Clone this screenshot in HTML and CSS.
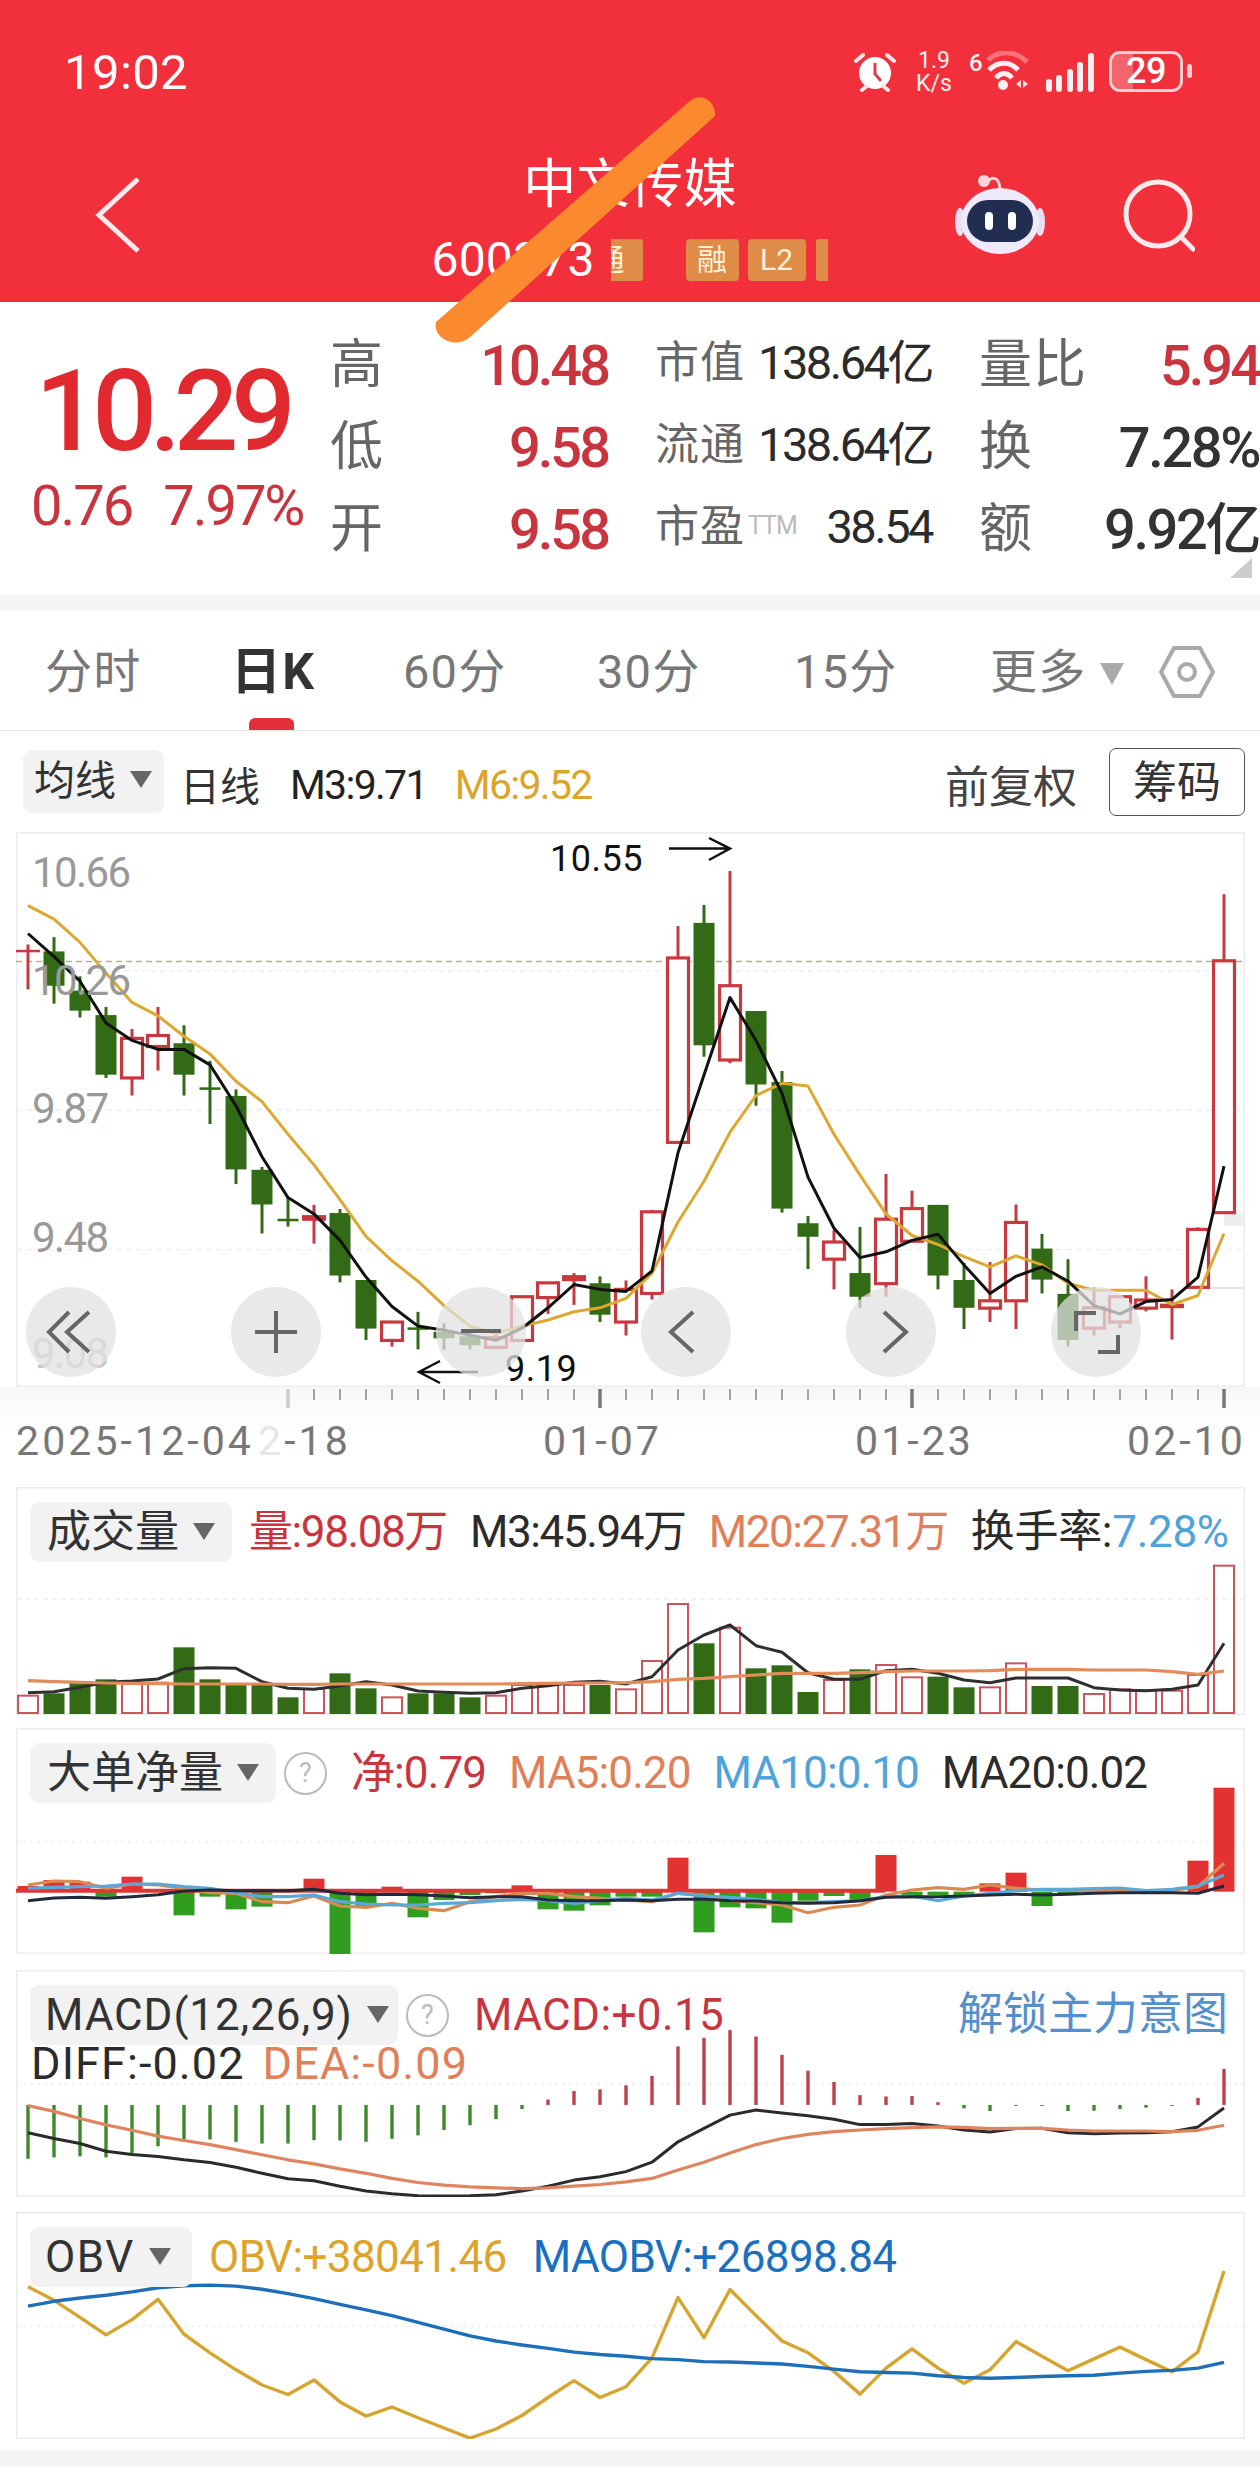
FILE: index.html
```html
<!DOCTYPE html>
<html lang="zh">
<head>
    <meta charset="utf-8">
    <title>中文传媒 日K</title>
    <link rel="stylesheet" href="styles.css">
</head>
<body>
<div class="page">

    <!-- 顶部红色区域 -->
    <header class="top">
        <div class="status">
            <span class="clock">19:02</span>
            <div class="status-icons">
                <svg class="ic-alarm" width="42" height="40" viewBox="0 0 42 40">
                    <circle cx="21" cy="21" r="16" fill="#fff"/>
                    <path d="M21 11v11l6 7" fill="none" stroke="#d8404a" stroke-width="3"/>
                    <path d="M2 9l7-6M40 9l-7-6M8 38l5-4M34 38l-5-4" stroke="#ffe6e6" stroke-width="4" stroke-linecap="round"/>
                </svg>
                <div class="speed"><span>1.9</span><span>K/s</span></div>
                <div class="wifi">
                    <span class="wifi-six">6</span>
                    <svg width="44" height="40" viewBox="0 0 44 40">
                        <path d="M3 9C14 -1 30 -1 42 11" fill="none" stroke="#f8727c" stroke-width="5"/>
                        <path d="M4 19C13 10 25 10 33 19" fill="none" stroke="#ffeef0" stroke-width="5"/>
                        <path d="M11 27C16 21 22 21 27 27" fill="none" stroke="#ffeef0" stroke-width="5"/>
                        <circle cx="18" cy="34" r="5" fill="#ffeef0"/>
                        <path d="M31 33l5-4v8zM38 29l5 4-5 4z" fill="#ffdfe2"/>
                    </svg>
                </div>
                <svg class="ic-signal" width="50" height="40" viewBox="0 0 50 40">
                    <g stroke="#ffeef0" stroke-width="6" stroke-linecap="round">
                        <path d="M4 30v7M14 26v11M25 20v17M35 13v24M46 4v33"/>
                    </g>
                </svg>
                <div class="battery">
                    <span class="battery-fill"></span>
                    <span class="battery-num">29</span>
                </div>
                <span class="battery-nub"></span>
            </div>
        </div>
        <div class="nav">
            <svg class="ic-back" width="50" height="80" viewBox="0 0 50 80">
                <path d="M44 4L5 40l39 36" fill="none" stroke="#ffe9ea" stroke-width="5"/>
            </svg>
            <div class="nav-title">
                <div class="name">中文传媒</div>
                <div class="code-row">
                    <span class="code">600373</span>
                    <span class="tag tag-cut">通</span>
                    <span class="tag tag-rong">融</span>
                    <span class="tag tag-l2">L2</span>
                    <span class="tag tag-sliver"></span>
                </div>
            </div>
            <svg class="ic-robot" width="90" height="82" viewBox="0 0 90 82">
                <path d="M31 12c4-9 13-10 14 4" fill="none" stroke="#f2d6dc" stroke-width="3"/>
                <circle cx="29" cy="8" r="6" fill="#ffd3da"/>
                <ellipse cx="5" cy="49" rx="5" ry="14" fill="#e9ddf4"/>
                <ellipse cx="85" cy="49" rx="5" ry="14" fill="#e9ddf4"/>
                <ellipse cx="45" cy="48" rx="39" ry="33" fill="#eeeafa"/>
                <rect x="12" y="27" width="66" height="42" rx="21" fill="#222d52"/>
                <rect x="30" y="39" width="8" height="18" rx="4" fill="#fff"/>
                <rect x="53" y="39" width="8" height="18" rx="4" fill="#fff"/>
            </svg>
            <svg class="ic-search" width="72" height="74" viewBox="0 0 72 74">
                <circle cx="35" cy="35" r="32" fill="none" stroke="#ffe9ea" stroke-width="5"/>
                <path d="M58 58l12 12" stroke="#ffe9ea" stroke-width="5" stroke-linecap="round"/>
            </svg>
        </div>
    </header>

    <!-- 报价 -->
    <section class="quote">
        <div class="price-box">
            <div class="price">10.29</div>
            <div class="change"><span>0.76</span><span>7.97%</span></div>
        </div>
        <div class="stats">
            <div class="stat"><span class="lb-big">高</span><span class="up">10.48</span></div>
            <div class="stat stat-mid"><span class="lb-mid">市值</span><span class="val-mid">138.64亿</span></div>
            <div class="stat"><span class="lb-big">量比</span><span class="up">5.94</span></div>
            <div class="stat"><span class="lb-big">低</span><span class="up">9.58</span></div>
            <div class="stat stat-mid"><span class="lb-mid">流通</span><span class="val-mid">138.64亿</span></div>
            <div class="stat"><span class="lb-big">换</span><span class="dark">7.28%</span></div>
            <div class="stat"><span class="lb-big">开</span><span class="up">9.58</span></div>
            <div class="stat stat-mid"><span class="lb-mid">市盈<sup class="ttm">TTM</sup></span><span class="val-mid">38.54</span></div>
            <div class="stat"><span class="lb-big">额</span><span class="dark">9.92亿</span></div>
        </div>
        <span class="corner"></span>
    </section>
    <div class="band"></div>

    <!-- 周期 -->
    <nav class="tabs">
        <span class="tab">分时</span>
        <span class="tab tab-on">日K</span>
        <span class="tab">60分</span>
        <span class="tab">30分</span>
        <span class="tab">15分</span>
        <span class="tab tab-more">更多<i class="tri tri-light"></i>
            <svg class="ic-hex" width="56" height="56" viewBox="0 0 56 56">
                <path d="M15 4h26l13 24-13 24H15L2 28z" fill="none" stroke="#aaa" stroke-width="4"/>
                <circle cx="28" cy="28" r="8" fill="none" stroke="#aaa" stroke-width="4"/>
            </svg>
        </span>
    </nav>

    <div class="toolbar">
        <span class="chip chip-ma">均线<i class="tri"></i></span>
        <span class="tb-day">日线</span>
        <span class="tb-m3">M3:9.71</span>
        <span class="tb-m6">M6:9.52</span>
        <span class="tb-fq">前复权</span>
        <span class="tb-chip">筹码</span>
    </div>

    <!-- K线 -->
    <section class="panel panel-k">
        <svg id="chart-k" width="1229" height="555" viewBox="16 832 1229 555"></svg>
        <span class="axis axis-1">10.66</span>
        <span class="axis axis-2">10.26</span>
        <span class="axis axis-3">9.87</span>
        <span class="axis axis-4">9.48</span>
        <span class="axis axis-5">9.08</span>
        <span class="mark mark-high">10.55</span>
        <span class="mark mark-low">9.19</span>
        <div class="chart-btns">
            <span class="chart-btn"><svg width="90" height="90" viewBox="0 0 90 90"><path d="M43 25L23 45l20 20M63 25L41 45l22 20"/></svg></span>
            <span class="chart-btn"><svg width="90" height="90" viewBox="0 0 90 90"><path d="M45 24v42M24 45h42"/></svg></span>
            <span class="chart-btn"><svg width="90" height="90" viewBox="0 0 90 90"><path d="M25 44h40"/></svg></span>
            <span class="chart-btn"><svg width="90" height="90" viewBox="0 0 90 90"><path d="M52 25L30 45l22 20"/></svg></span>
            <span class="chart-btn"><svg width="90" height="90" viewBox="0 0 90 90"><path d="M38 25l22 20-22 20"/></svg></span>
            <span class="chart-btn"><svg width="90" height="90" viewBox="0 0 90 90"><path d="M25 44V26h20M47 65h20V48"/></svg></span>
        </div>
    </section>

    <div class="dates">
        <svg id="ticks" width="1260" height="22" viewBox="0 1387 1260 22"></svg>
        <div class="date-row">
            <span>2025-12-04</span>
            <span><b class="fade">2</b>-18</span>
            <span>01-07</span>
            <span>01-23</span>
            <span>02-10</span>
        </div>
    </div>

    <!-- 成交量 -->
    <section class="panel panel-vol">
        <svg id="chart-vol" width="1229" height="228" viewBox="16 1487 1229 228"></svg>
        <div class="legend">
            <span class="chip">成交量<i class="tri"></i></span>
            <span class="red">量:98.08万</span>
            <span class="black">M3:45.94万</span>
            <span class="orange">M20:27.31万</span>
            <span class="black turnover">换手率:<b class="blue">7.28%</b></span>
        </div>
    </section>

    <!-- 大单净量 -->
    <section class="panel panel-net">
        <svg id="chart-net" width="1229" height="226" viewBox="16 1728 1229 226"></svg>
        <div class="legend legend-net">
            <span class="chip">大单净量<i class="tri"></i></span>
            <span class="help">?</span>
            <span class="red">净:0.79</span>
            <span class="orange">MA5:0.20</span>
            <span class="blue">MA10:0.10</span>
            <span class="black">MA20:0.02</span>
        </div>
    </section>

    <!-- MACD -->
    <section class="panel panel-macd">
        <svg id="chart-macd" width="1229" height="227" viewBox="16 1970 1229 227"></svg>
        <div class="legend">
            <span class="chip chip-macd">MACD(12,26,9)<i class="tri"></i></span>
            <span class="help">?</span>
            <span class="red macd-val">MACD:+0.15</span>
            <span class="unlock">解锁主力意图</span>
        </div>
        <div class="legend legend-2">
            <span class="black">DIFF:-0.02</span>
            <span class="orange">DEA:-0.09</span>
        </div>
    </section>

    <!-- OBV -->
    <section class="panel panel-obv">
        <svg id="chart-obv" width="1229" height="227" viewBox="16 2212 1229 227"></svg>
        <div class="legend legend-obv">
            <span class="chip chip-obv">OBV<i class="tri"></i></span>
            <span class="gold">OBV:+38041.46</span>
            <span class="navy">MAOBV:+26898.84</span>
        </div>
    </section>

    <div class="band band-end"></div>

    <svg class="stroke" width="760" height="360" viewBox="0 0 760 360">
        <path d="M690 101C700 92 716 100 715 116L470 337C456 350 432 338 436 322z" fill="#fb8a2e"/>
    </svg>
</div>
<script src="chart.js"></script>
</body>
</html>
```

FILE: styles.css
```css
* {
    box-sizing: border-box;
}

body {
    margin: 0;
    background-color: #fff;
    font-family: Roboto, "Noto Sans CJK SC", sans-serif;
    color: #333;
}

.page {
    position: relative;
    width: 1260px;
    height: 2491px;
    overflow: hidden;
}

/* top */
.top {
    height: 302px;
    background-color: #f1303c;
    color: #fff;
}

.status {
    display: flex;
    align-items: flex-start;
    justify-content: space-between;
    height: 130px;
    padding: 45px 68px 0 64px;
}

.clock {
    font-size: 49px;
    line-height: 56px;
    letter-spacing: 0.4px;
}

.status-icons {
    display: flex;
    align-items: flex-start;
    padding-top: 6px;
}

.ic-alarm {
    margin-top: 1px;
}

.speed {
    display: flex;
    flex-direction: column;
    width: 40px;
    margin: -2px 0 0 18px;
    color: #ffeef0;
    text-align: center;
    font-size: 23px;
    line-height: 23px;
}

.wifi {
    display: flex;
    margin-left: 15px;
}

.wifi-six {
    width: 16px;
    color: #ffeef0;
    font-size: 24px;
    line-height: 24px;
    font-weight: 500;
}

.ic-signal {
    margin-left: 16px;
    margin-top: 1px;
}

.battery {
    position: relative;
    width: 74px;
    height: 41px;
    margin-left: 14px;
    border: 3px solid #fbd0d4;
    border-radius: 11px;
    text-align: center;
}

.battery-fill {
    position: absolute;
    left: 0;
    top: 0;
    bottom: 0;
    width: 21px;
    background-color: rgba(255, 255, 255, 0.25);
    border-radius: 8px 0 0 8px;
}

.battery-num {
    position: relative;
    display: block;
    font-size: 36px;
    line-height: 35px;
    font-weight: 500;
    letter-spacing: -0.5px;
}

.battery-nub {
    width: 5px;
    height: 14px;
    margin: 13px 0 0 4px;
    background-color: #fbd0d4;
    border-radius: 3px;
}

.nav {
    position: relative;
    display: flex;
    justify-content: center;
}

.nav-title {
    text-align: center;
}

.name {
    height: 82px;
    padding-top: 25px;
    font-size: 53px;
    line-height: 60px;
    letter-spacing: 0.4px;
}

.code-row {
    display: flex;
    align-items: center;
    height: 48px;
    margin-top: 24px;
}

.code {
    width: 159px;
    margin-left: -1px;
    font-size: 48px;
    line-height: 48px;
    letter-spacing: 0.2px;
    color: #fff;
    text-align: left;
}

.tag {
    height: 42px;
    background-color: #de8c48;
    border-radius: 4px;
    color: #fff2d8;
    font-size: 30px;
    line-height: 42px;
    text-align: center;
    overflow: hidden;
}

.tag-cut {
    width: 32px;
    margin-left: 20px;
    border-radius: 0 3px 3px 0;
    text-indent: -16px;
    white-space: nowrap;
    text-align: left;
}

.tag-rong {
    width: 53px;
    margin-left: 43px;
}

.tag-l2 {
    width: 58px;
    margin-left: 9px;
}

.tag-sliver {
    width: 12px;
    margin-left: 10px;
    border-radius: 3px 0 0 3px;
}

/* icons lying on the red bar */
.ic-back {
    position: absolute;
    left: 94px;
    top: 45px;
}

.ic-robot {
    position: absolute;
    left: 955px;
    top: 43px;
}

.ic-search {
    position: absolute;
    left: 1123px;
    top: 49px;
}

.stroke {
    position: absolute;
    left: 0;
    top: 0;
}

/* quote */
.quote {
    position: relative;
    display: flex;
    height: 293px;
}

.price-box {
    width: 330px;
    padding: 53px 0 0 31px;
}

.price {
    margin-left: 4px;
    font-size: 114px;
    line-height: 112px;
    letter-spacing: -7.5px;
    font-weight: 500;
    color: #e02a30;
}

.change {
    display: flex;
    gap: 31px;
    margin-top: 9px;
    font-size: 56px;
    line-height: 60px;
    letter-spacing: -2px;
    color: #c9353e;
}

.stats {
    display: grid;
    grid-template-columns: 278px 277px 280px;
    grid-auto-rows: 82px;
    column-gap: 47px;
    padding-top: 22px;
}

.stat {
    display: flex;
    align-items: center;
    justify-content: space-between;
    font-size: 56px;
    line-height: 60px;
    letter-spacing: -3px;
    font-weight: 500;
    white-space: nowrap;
}

.stat .lb-big {
    margin-top: -1px;
    font-size: 53px;
    letter-spacing: 1px;
    font-weight: 400;
    color: #666;
}

.up {
    margin-top: 2px;
    color: #c9353e;
}

.stat .dark {
    margin-top: 2px;
    letter-spacing: -2.4px;
    color: #333;
}

.stat-mid {
    padding-bottom: 4px;
}

.stat .lb-mid {
    font-size: 44px;
    letter-spacing: 1px;
    font-weight: 400;
    color: #666;
}

.val-mid {
    font-size: 47px;
    letter-spacing: -2.5px;
    font-weight: 400;
    color: #2b2b2b;
}

.ttm {
    margin-left: 3px;
    font-size: 25px;
    letter-spacing: -1px;
    color: #bbb;
    vertical-align: 8px;
    line-height: 0;
}

.corner {
    position: absolute;
    right: 8px;
    bottom: 17px;
    border-left: 22px solid transparent;
    border-bottom: 20px solid #ccc;
}

.band {
    height: 15px;
    background-color: #f5f5f5;
}

.band-end {
    height: 16px;
    margin-top: 11px;
}

/* tabs */
.tabs {
    display: grid;
    grid-template-columns: 190px 168px 194px 197px 196px 1fr;
    height: 121px;
    padding-left: 45px;
    border-bottom: 1.5px solid #e4e4e4;
    font-size: 47px;
    letter-spacing: 1.2px;
    color: #777;
}

.tab {
    position: relative;
    padding-top: 34px;
    line-height: 56px;
}

.tab-on {
    margin-left: -4px;
    font-size: 50px;
    font-weight: 700;
    color: #333;
}

.tab-on::after {
    content: "";
    position: absolute;
    left: 18px;
    bottom: 0;
    width: 45px;
    height: 12px;
    background-color: #e5303a;
    border-radius: 6px 6px 0 0;
}

.tab-more {
    display: flex;
    align-items: flex-start;
}

.tri {
    display: inline-block;
    width: 0;
    height: 0;
    margin-left: 14px;
    border-left: 11px solid transparent;
    border-right: 11px solid transparent;
    border-top: 17px solid #666;
    vertical-align: 7px;
}

.tri-light {
    margin: 19px 0 0 14px;
    border-left-width: 12px;
    border-right-width: 12px;
    border-top: 22px solid #aaa;
}

.ic-hex {
    margin: 0 0 0 35px;
}

/* toolbar */
.toolbar {
    display: flex;
    align-items: center;
    height: 101px;
    padding: 0 15px 0 23px;
    white-space: nowrap;
}

.chip {
    display: inline-block;
    height: 60px;
    padding: 0 17px;
    background-color: #f2f2f2;
    border-radius: 9px;
    color: #333;
    font-size: 44px;
    line-height: 60px;
}

.chip-ma {
    width: 141px;
    height: 63px;
    padding: 0 0 0 11px;
    font-size: 41px;
    line-height: 63px;
}

.tb-day {
    margin: 5px 0 0 16px;
    font-size: 40px;
}

.tb-m3,
.tb-m6 {
    margin-top: 6px;
    font-size: 41px;
    letter-spacing: -1.7px;
}

.tb-m3 {
    margin-left: 30px;
    color: #222;
}

.tb-m6 {
    margin-left: 28px;
    color: #dba52b;
}

.tb-fq {
    margin-left: auto;
    margin-top: 4px;
    font-size: 44px;
    color: #444;
}

.tb-chip {
    width: 136px;
    height: 68px;
    margin-left: 32px;
    border: 1.5px solid #555;
    border-radius: 7px;
    font-size: 44px;
    line-height: 68px;
    text-align: center;
}

/* chart panels */
.panel {
    position: relative;
    width: 1229px;
    margin-left: 16px;
    box-shadow: inset 0 0 0 1.5px #ececec;
}

.panel svg {
    display: block;
}

.panel-k {
    height: 555px;
}

.panel-vol {
    height: 228px;
}

.panel-net {
    height: 226px;
    margin-top: 13px;
}

.panel-macd {
    height: 227px;
    margin-top: 16px;
}

.panel-obv {
    height: 227px;
    margin-top: 15px;
}

.axis {
    position: absolute;
    left: 16px;
    font-size: 42px;
    line-height: 40px;
    letter-spacing: -1.6px;
    color: #999;
}

.axis-1 { top: 21px; }
.axis-2 { top: 129px; }
.axis-3 { top: 257px; }
.axis-4 { top: 386px; }
.axis-5 { top: 502px; opacity: 0.6; }

.mark {
    position: absolute;
    font-size: 36px;
    line-height: 36px;
    letter-spacing: 0.5px;
    color: #111;
}

.mark-high {
    left: 534px;
    top: 9px;
}

.mark-low {
    left: 489px;
    top: 519px;
}

.chart-btns {
    position: absolute;
    left: 10px;
    top: 455px;
    display: flex;
    gap: 115px;
}

.chart-btn {
    width: 90px;
    height: 90px;
    background-color: rgba(226, 226, 226, 0.75);
    border-radius: 50%;
}

.chart-btn path {
    fill: none;
    stroke: #666;
    stroke-width: 4;
}

.dates {
    height: 100px;
    background: linear-gradient(#f7f7f7, #fff 45%);
}

#ticks {
    display: block;
}

.date-row {
    display: grid;
    grid-template-columns: 242px 285px 312px 272px auto;
    padding: 7px 0 0 16px;
    font-size: 41px;
    line-height: 50px;
    letter-spacing: 3.1px;
    color: #777;
    white-space: nowrap;
}

.fade {
    font-weight: 400;
    color: #e6e6e6;
}

.legend {
    position: absolute;
    left: 14px;
    right: 17px;
    top: 15px;
    display: flex;
    align-items: center;
    gap: 23px;
    font-size: 44px;
    line-height: 60px;
    letter-spacing: -1.4px;
    white-space: nowrap;
}

.legend .chip {
    margin-right: -6px;
    letter-spacing: 0;
}

.legend .chip-macd {
    width: 368px;
    padding: 0 0 0 15px;
    letter-spacing: 0.9px;
}

.legend .chip-obv {
    width: 162px;
    padding: 0 0 0 15px;
    letter-spacing: 1.6px;
}

.legend .turnover {
    letter-spacing: -0.3px;
}

.legend .macd-val {
    margin-left: 1px;
    letter-spacing: 0.4px;
}

.legend .help {
    width: 43px;
    height: 43px;
    margin: 0 1px 0 -9px;
    border: 2.5px solid #bbb;
    border-radius: 50%;
    color: #bbb;
    font-size: 27px;
    line-height: 38px;
    text-align: center;
    letter-spacing: 0;
}

.legend-net {
    letter-spacing: -0.9px;
}

.legend-2 {
    top: 66px;
    left: 15px;
    gap: 18px;
    font-size: 45px;
    line-height: 56px;
    letter-spacing: 1.1px;
}

.legend-obv {
    letter-spacing: -0.6px;
}

.red { color: #c9353e; }
.orange { color: #e0805a; }
.black { color: #2b2b2b; }
.blue { color: #4fa3d9; font-weight: 400; }
.gold { color: #dda32a; }
.navy { color: #1b6fc0; margin-left: 3px; }

.unlock {
    margin-left: auto;
    font-size: 45px;
    letter-spacing: 0;
    color: #5590cc;
}
```

FILE: chart.js
```js
const X = (i) => 28 + 26 * i;
const NS = 'http://www.w3.org/2000/svg';

function add(svg, tag, attrs) {
    const el = document.createElementNS(NS, tag);
    for (const key in attrs) el.setAttribute(key, attrs[key]);
    svg.appendChild(el);
    return el;
}

function line(svg, vals, toY, color, width) {
    const points = vals.map((v, i) => X(i) + ',' + toY(v).toFixed(1)).join(' ');
    add(svg, 'polyline', { points, fill: 'none', stroke: color, 'stroke-width': width, 'stroke-linejoin': 'round' });
}

function dashed(svg, y, color, width, dash) {
    add(svg, 'line', { x1: 16, x2: 1245, y1: y, y2: y, stroke: color, 'stroke-width': width, 'stroke-dasharray': dash });
}

const RED = '#c8383f';
const GREEN = '#326a16';

/* K线: [颜色, 上影, 下影, 实体上, 实体下] */
const candles = [
    ['r', 305, 415, 318, 323], ['g', 287, 450, 322, 406], ['g', 383, 484, 418, 467], ['g', 458, 632, 478, 624],
    ['h', 512, 675, 535, 632], ['h', 458, 614, 528, 555], ['g', 503, 675, 547, 624], ['g', 590, 745, 655, 661],
    ['g', 660, 892, 676, 856], ['g', 850, 1013, 857, 942], ['g', 925, 996, 977, 983], ['r', 943, 1038, 968, 982],
    ['g', 953, 1133, 963, 1116], ['g', 1127, 1274, 1127, 1246], ['h', 1230, 1290, 1230, 1275], ['g', 1205, 1297, 1243, 1248],
    ['g', 1233, 1298, 1254, 1270], ['g', 1250, 1297, 1265, 1287], ['h', 1260, 1295, 1268, 1292], ['h', 1168, 1275, 1168, 1275],
    ['h', 1134, 1210, 1134, 1170], ['r', 1110, 1188, 1115, 1130], ['g', 1118, 1230, 1135, 1212], ['h', 1128, 1263, 1150, 1230],
    ['h', 955, 1175, 960, 1160], ['h', 260, 792, 338, 790], ['g', 208, 580, 252, 552], ['h', 125, 596, 406, 588],
    ['g', 468, 700, 468, 648], ['g', 615, 962, 642, 952], ['g', 970, 1100, 988, 1021], ['h', 1005, 1150, 1034, 1076],
    ['g', 997, 1195, 1110, 1168], ['h', 867, 1168, 978, 1136], ['h', 908, 1032, 952, 1032], ['g', 943, 1150, 943, 1116],
    ['g', 1085, 1247, 1127, 1195], ['h', 1083, 1230, 1178, 1196], ['h', 942, 1247, 986, 1178], ['g', 1014, 1160, 1050, 1126],
    ['g', 1076, 1290, 1161, 1274], ['h', 1145, 1263, 1195, 1245], ['h', 1168, 1245, 1168, 1230], ['h', 1118, 1204, 1176, 1196],
    ['r', 1150, 1273, 1185, 1196], ['h', 998, 1145, 1003, 1145], ['h', 182, 962, 345, 962],
];
const kM3 = [278, 335, 395, 497, 540, 562, 562, 600, 700, 825, 925, 965, 1030, 1120, 1192, 1240, 1250, 1262, 1275, 1245, 1195, 1138, 1150, 1155,
    1105, 815, 625, 435, 540, 670, 875, 1000, 1072, 1058, 1030, 1015, 1090, 1160, 1118, 1095, 1130, 1190, 1210, 1180, 1175, 1120, 848];
const kM6 = [210, 243, 300, 375, 447, 480, 530, 573, 640, 690, 770, 845, 930, 1020, 1080, 1130, 1190, 1240, 1258, 1240, 1225, 1205, 1195, 1172,
    1110, 985, 885, 765, 675, 645, 652, 770, 870, 965, 1018, 1040, 1070, 1095, 1068, 1090, 1135, 1152, 1152, 1152, 1187, 1165, 1013];

function drawK() {
    const svg = document.getElementById('chart-k');
    const Y = (v) => 820 + v / 2.45;
    dashed(svg, 971, '#f0f0f0', 1.5, '5 4');
    dashed(svg, 1110, '#eee', 1.5, '6 4');
    dashed(svg, 1249.5, '#eee', 1.5, '6 4');
    dashed(svg, 961.5, '#b5b09a', 1.5, '6 4');
    add(svg, 'line', { x1: 1204, x2: 1245, y1: 1288, y2: 1288, stroke: '#ddd', 'stroke-width': 1.5 });
    add(svg, 'rect', { x: 1224, y: 1213, width: 21, height: 13, fill: '#eee' });

    candles.forEach((c, i) => {
        const x = X(i);
        const [type, hi, lo, top, bot] = c;
        const color = type === 'g' ? GREEN : RED;
        add(svg, 'line', { x1: x, x2: x, y1: Y(hi), y2: Y(lo), stroke: color, 'stroke-width': 3 });
        if (type === 'h') {
            add(svg, 'rect', { x: x - 10.5, y: Y(top), width: 21, height: Y(bot) - Y(top), fill: '#fff', stroke: color, 'stroke-width': 3.2 });
        } else {
            const w = type === 'r' ? 24 : 21;
            add(svg, 'rect', { x: x - w / 2, y: Y(top), width: w, height: Math.max(Y(bot) - Y(top), 2.5), fill: color });
        }
    });
    line(svg, kM6, Y, '#dda832', 3);
    line(svg, kM3, Y, '#111', 3);

    add(svg, 'path', { d: 'M669 848.6H730M709 838L730 848.6L709 860', fill: 'none', stroke: '#111', 'stroke-width': 2.5 });
    add(svg, 'path', { d: 'M478 1372H419M440 1361L419 1372L440 1383', fill: 'none', stroke: '#111', 'stroke-width': 2.5 });
}

function drawTicks() {
    const svg = document.getElementById('ticks');
    for (let i = 10; i <= 46; i++) {
        const big = i === 10 || i === 22 || i === 34 || i === 46;
        add(svg, 'line', {
            x1: X(i), x2: X(i), y1: 1389, y2: big ? 1408 : 1400,
            stroke: i === 10 ? '#ccc' : (big ? '#777' : '#999'),
            'stroke-width': big ? 3.5 : 1.8,
        });
    }
}

/* 成交量: g 实心, h 空心 */
const volKinds = 'hggghhgggggh' + 'gghggghhhhgh' + 'hhghggghghhg' + 'ghhgghhhhhh';
const volTops = [647, 640, 603, 598, 612, 608, 502, 598, 615, 615, 652, 627, 580, 625, 652, 640, 640, 652, 647, 615, 615, 615, 615, 628,
    543, 372, 490, 443, 565, 556, 636, 600, 568, 555, 592, 590, 622, 622, 550, 618, 618, 642, 628, 632, 632, 585, 257];
const volM3 = [638, 635, 622, 607, 603, 597, 566, 563, 565, 605, 625, 628, 618, 605, 615, 633, 637, 640, 638, 625, 617, 607, 604, 612,
    590, 510, 465, 435, 497, 517, 578, 598, 598, 572, 568, 580, 600, 608, 594, 594, 594, 623, 630, 632, 628, 615, 490];
const volM20 = [602, 605, 607, 609, 610, 611, 612, 612, 612, 612, 613, 613, 612, 612, 612, 612, 612, 612, 612, 611, 610, 609, 609, 608,
    605, 598, 595, 590, 585, 580, 580, 580, 578, 575, 573, 573, 573, 572, 568, 568, 568, 570, 570, 570, 575, 583, 573];

function drawVol() {
    const svg = document.getElementById('chart-vol');
    const Y = (v) => 1480 + v / 3;
    dashed(svg, 1599, '#eee', 1.5, '5 4');
    volTops.forEach((v, i) => {
        const y = Y(v);
        if (volKinds[i] === 'g') {
            add(svg, 'rect', { x: X(i) - 10.5, y, width: 21, height: 1714 - y, fill: GREEN });
        } else {
            add(svg, 'rect', { x: X(i) - 10, y, width: 20, height: 1713 - y, fill: 'none', stroke: '#c9555e', 'stroke-width': 2 });
        }
    });
    line(svg, volM3, Y, '#2f2f2f', 3);
    line(svg, volM20, Y, '#e38b5b', 3.2);
}

/* 大单净量: 以 1235 为零轴 */
const netBars = [1218, 1200, 1205, 1250, 1190, 1232, 1306, 1250, 1288, 1280, 1232, 1196, 1424, 1280, 1220, 1312, 1260, 1245, 1240, 1216, 1288, 1292, 1276, 1250,
    1250, 1133, 1357, 1282, 1285, 1328, 1262, 1248, 1262, 1125, 1255, 1245, 1245, 1210, 1178, 1278, 1240, 1232, 1232, 1232, 1232, 1142, 923];
const net5 = [1215, 1203, 1205, 1225, 1212, 1215, 1225, 1238, 1240, 1265, 1268, 1248, 1278, 1282, 1270, 1285, 1292, 1265, 1250, 1240, 1240, 1250, 1255, 1260,
    1265, 1240, 1245, 1262, 1268, 1275, 1298, 1282, 1275, 1245, 1230, 1223, 1228, 1215, 1225, 1230, 1232, 1232, 1230, 1232, 1232, 1220, 1150];
const net10 = [1225, 1222, 1220, 1218, 1212, 1212, 1220, 1225, 1238, 1250, 1250, 1245, 1265, 1272, 1275, 1275, 1270, 1268, 1262, 1258, 1262, 1270, 1262, 1255,
    1260, 1240, 1248, 1252, 1258, 1268, 1268, 1265, 1262, 1250, 1248, 1262, 1248, 1240, 1232, 1228, 1228, 1226, 1224, 1232, 1228, 1218, 1185];
const net20 = [1262, 1254, 1252, 1255, 1250, 1244, 1233, 1230, 1232, 1232, 1232, 1228, 1240, 1244, 1243, 1244, 1248, 1253, 1250, 1250, 1260, 1262, 1262, 1260,
    1262, 1258, 1258, 1262, 1263, 1268, 1270, 1268, 1262, 1252, 1250, 1250, 1248, 1245, 1243, 1245, 1243, 1240, 1238, 1238, 1238, 1240, 1218];

function drawNet() {
    const svg = document.getElementById('chart-net');
    const Y = (v) => 1480 + v / 3;
    dashed(svg, 1842, '#eee', 1.5, '3 4');
    const zero = Y(1235);
    netBars.forEach((v, i) => {
        const y = Y(v);
        if (v < 1232) {
            add(svg, 'rect', { x: X(i) - 10.5, y, width: 21, height: zero - y, fill: '#e33232' });
        } else if (v > 1235) {
            add(svg, 'rect', { x: X(i) - 10.5, y: zero, width: 21, height: y - zero, fill: '#2f9e1e' });
        }
    });
    add(svg, 'line', { x1: 16, x2: 885, y1: zero - 1, y2: zero - 1, stroke: '#e03535', 'stroke-width': 4 });
    line(svg, net5, Y, '#d98a50', 3.2);
    line(svg, net10, Y, '#5ba8d8', 3.2);
    line(svg, net20, Y, '#22293a', 3);
}

const macdBars = [587, 583, 580, 583, 570, 550, 530, 530, 537, 542, 542, 532, 533, 537, 528, 518, 502, 488, 470, 440, 412, 387, 382, 370,
    342, 255, 230, 207, 226, 280, 327, 360, 399, 403, 402, 420, 438, 446, 431, 431, 446, 445, 440, 436, 431, 407, 322];
const macdDiff = [510, 527, 542, 565, 574, 580, 590, 598, 612, 630, 646, 652, 668, 682, 690, 696, 697, 696, 693, 682, 668, 650, 640, 625,
    597, 537, 497, 458, 443, 452, 460, 470, 486, 486, 483, 490, 502, 508, 498, 497, 510, 513, 511, 510, 507, 493, 437];
const macdDea = [430, 447, 468, 487, 503, 520, 533, 545, 560, 575, 590, 602, 617, 630, 645, 657, 665, 670, 673, 675, 673, 668, 663, 655,
    645, 620, 597, 570, 545, 527, 515, 507, 502, 498, 495, 493, 494, 498, 497, 497, 502, 505, 505, 505, 507, 503, 488];

function drawMacd() {
    const svg = document.getElementById('chart-macd');
    const Y = (v) => 1960 + v / 2.953;
    dashed(svg, 2084, '#eee', 1.5, '3 4');
    const zero = Y(428);
    macdBars.forEach((v, i) => {
        const y = Y(v);
        add(svg, 'line', {
            x1: X(i), x2: X(i), y1: zero, y2: y,
            stroke: i >= 20 && v < 428 ? '#c0404a' : '#3c8a2c',
            'stroke-width': 3.4,
        });
    });
    line(svg, macdDiff, Y, '#2b2b2b', 3);
    line(svg, macdDea, Y, '#de8560', 3.2);
}

const obvLine = [965, 1005, 1055, 1107, 1062, 1002, 1105, 1160, 1210, 1255, 1283, 1240, 1305, 1347, 1320, 1352, 1382, 1412, 1385, 1345, 1292, 1242, 1292, 1260,
    1175, 997, 1115, 973, 1050, 1125, 1160, 1215, 1282, 1205, 1148, 1205, 1250, 1210, 1127, 1170, 1213, 1178, 1143, 1180, 1216, 1157, 918];
const maObv = [1022, 1008, 998, 990, 980, 968, 962, 960, 963, 972, 985, 1000, 1017, 1033, 1050, 1070, 1090, 1110, 1125, 1137, 1147, 1158, 1165, 1170,
    1177, 1180, 1186, 1187, 1190, 1193, 1200, 1208, 1216, 1218, 1220, 1228, 1233, 1235, 1233, 1230, 1228, 1226, 1220, 1215, 1212, 1205, 1188];

function drawObv() {
    const svg = document.getElementById('chart-obv');
    const Y = (v) => 1960 + v / 2.953;
    dashed(svg, 2326, '#eee', 1.5, '3 4');
    line(svg, obvLine, Y, '#d6a52f', 3.4);
    line(svg, maObv, Y, '#1e6fb8', 3.4);
}

drawK();
drawTicks();
drawVol();
drawNet();
drawMacd();
drawObv();
```
